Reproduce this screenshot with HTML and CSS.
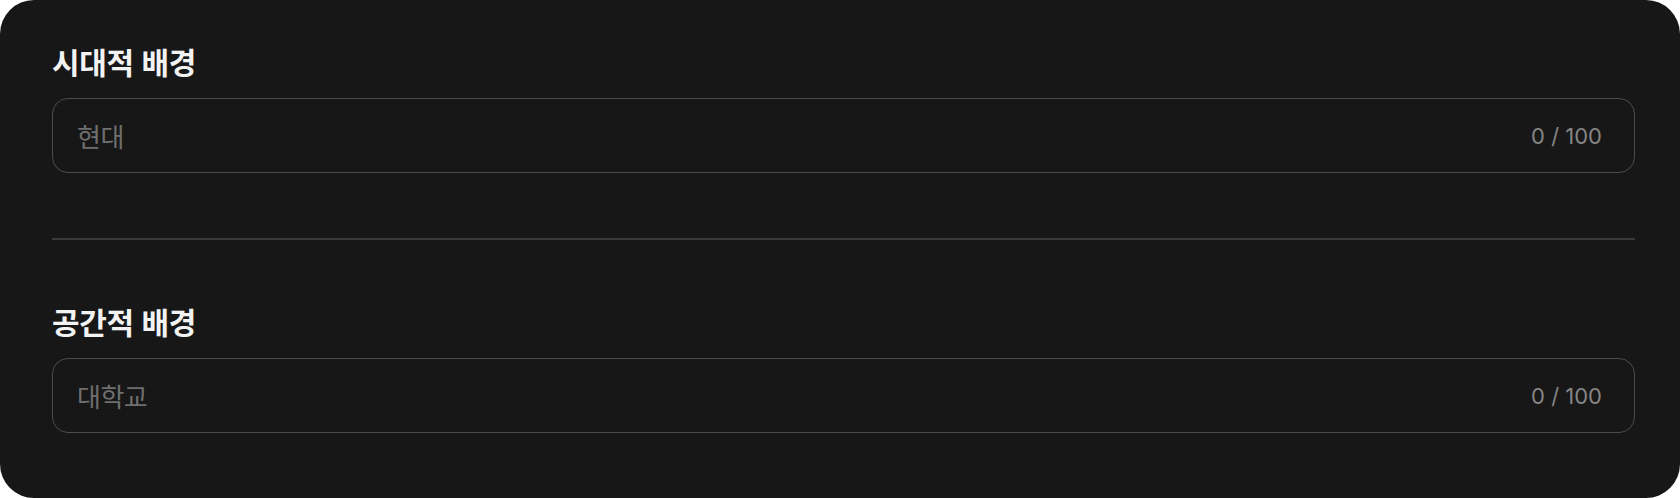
FILE: index.html
```html
<!DOCTYPE html>
<html lang="ko">
<head>
<meta charset="utf-8">
<title>배경 설정</title>
<link rel="stylesheet" href="styles.css">
</head>
<body>
<div class="card">
  <section class="field">
    <h2 class="field-title">시대적 배경</h2>
    <div class="input">
      <span class="placeholder">현대</span>
      <span class="counter">0 / 100</span>
    </div>
  </section>
  <hr class="divider">
  <section class="field">
    <h2 class="field-title">공간적 배경</h2>
    <div class="input">
      <span class="placeholder">대학교</span>
      <span class="counter">0 / 100</span>
    </div>
  </section>
</div>
</body>
</html>
```

FILE: styles.css
```css
* { box-sizing: border-box; }
html, body { margin: 0; padding: 0; background: #ffffff; }
body { width: 1680px; height: 498px; overflow: hidden; }

.card {
  width: 1680px;
  height: 498px;
  background: #171717;
  border-radius: 34px;
  padding: 41px 45px 0 52px;
  font-family: "Noto Sans CJK KR", "Noto Sans", sans-serif;
}

.field {
  display: flex;
  flex-direction: column;
  gap: 17px;
}

.field-title {
  margin: 0;
  font-size: 30px;
  line-height: 40px;
  font-weight: 700;
  letter-spacing: -0.4px;
  color: #f2f2f2;
}

.input {
  height: 75px;
  border: 1px solid #4c4c4c;
  border-radius: 16px;
  display: flex;
  align-items: center;
  justify-content: space-between;
  padding: 0 32px 0 24px;
}

.placeholder {
  font-size: 26px;
  letter-spacing: -0.5px;
  color: #6f6f6f;
}

.counter {
  font-family: "Inter", "Noto Sans", sans-serif;
  font-size: 22px;
  color: #858585;
}

.divider {
  margin: 65px 0 61px;
  border: 0;
  height: 2px;
  background: #3a3a3a;
}
```
